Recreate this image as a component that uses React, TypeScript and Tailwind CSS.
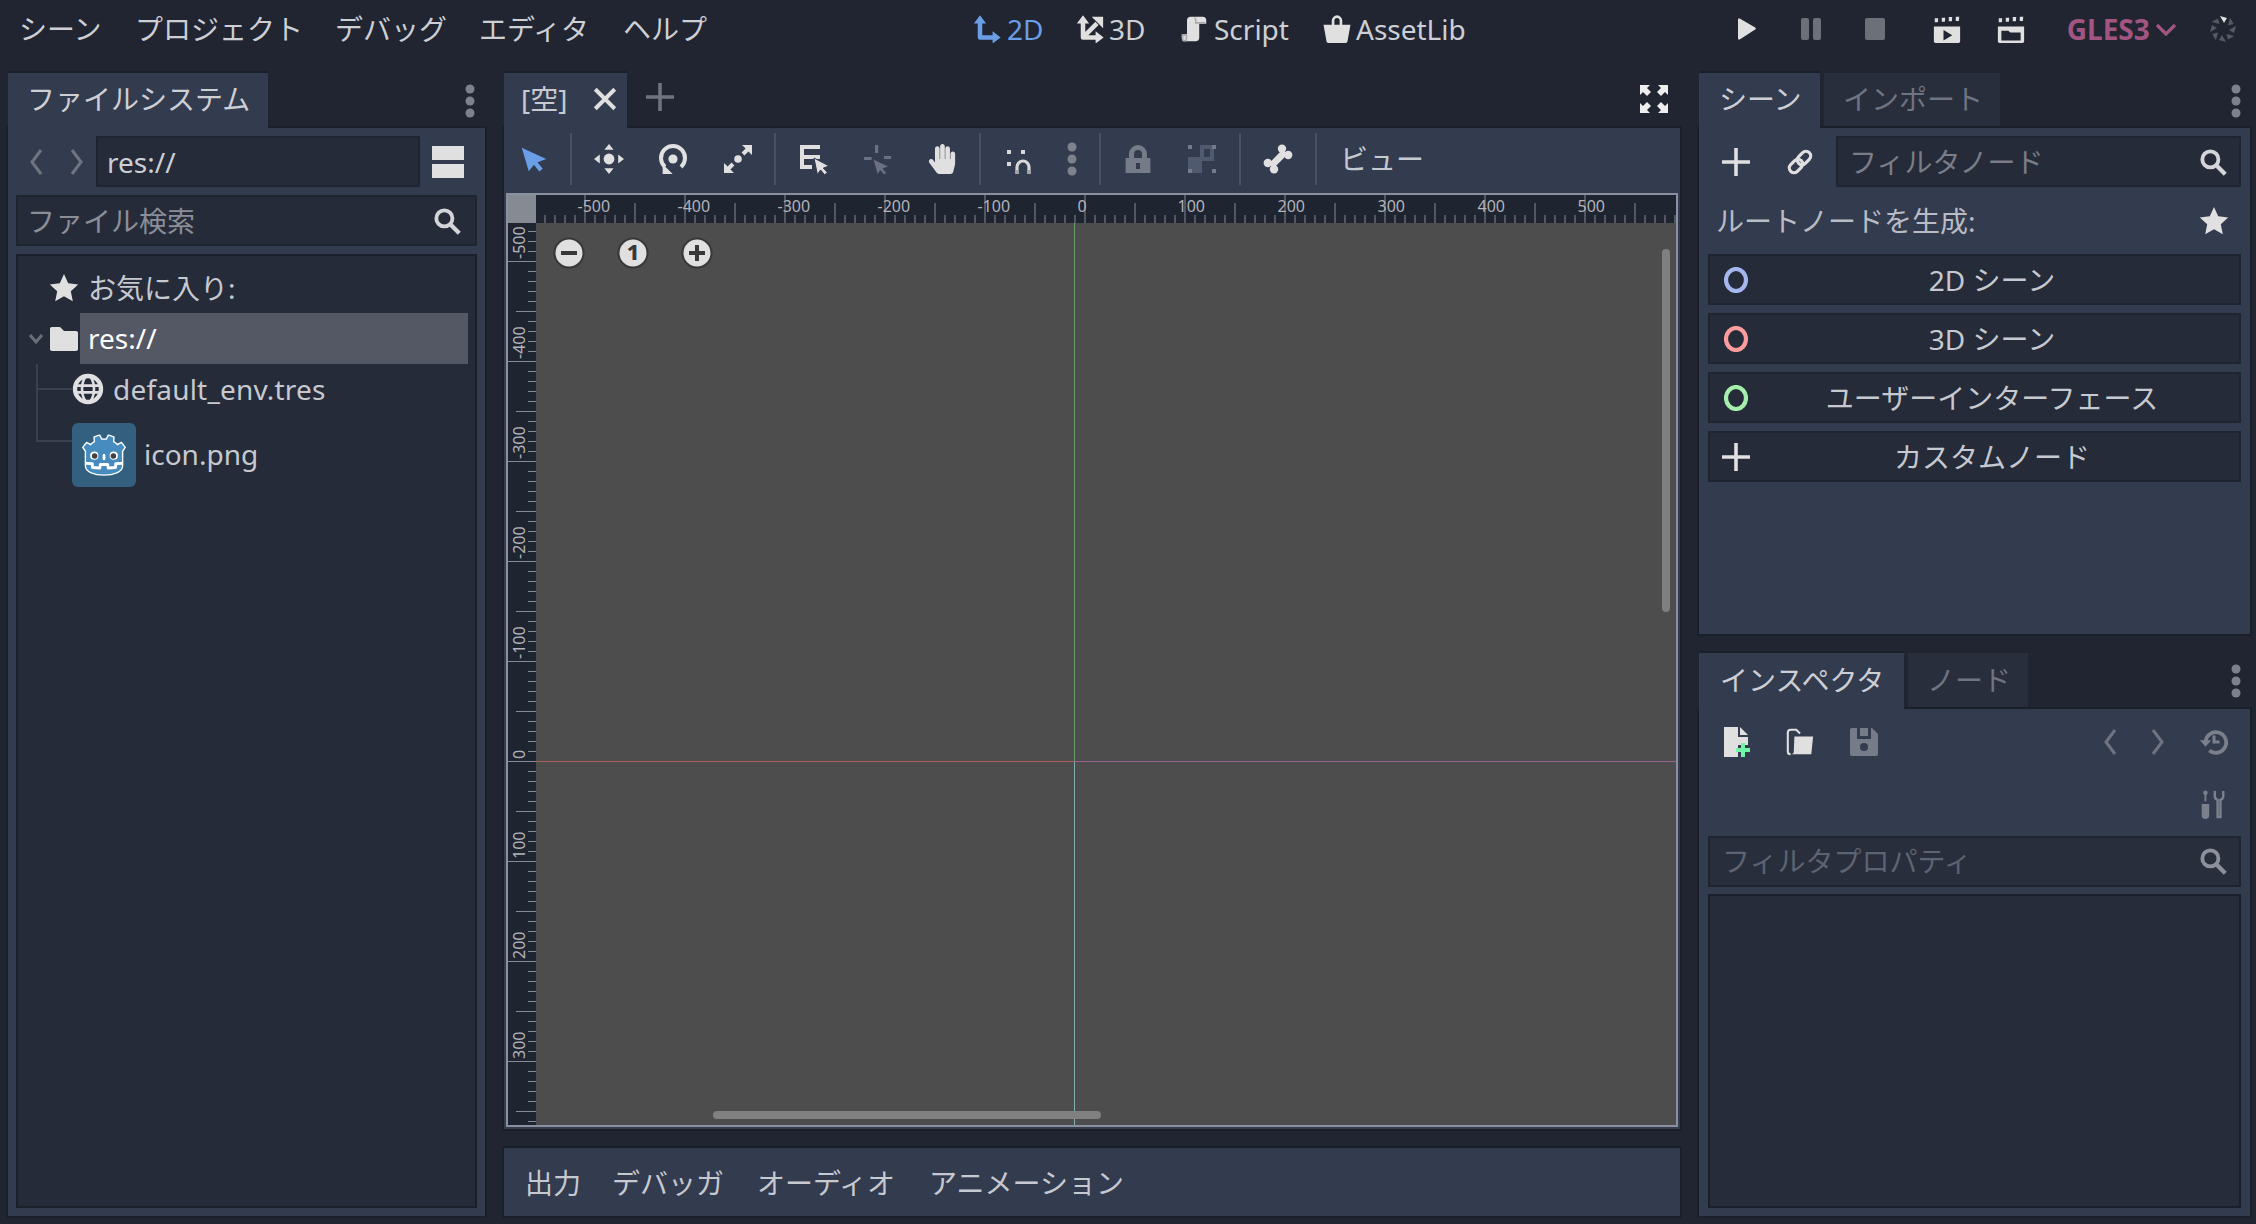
import { FaHandPaper } from "react-icons/fa";

const light = "#e0e0e0";
const dim = "#6f7480";

const majors = [-500, -400, -300, -200, -100, 0, 100, 200, 300, 400, 500];
const vMajors = [-500, -400, -300, -200, -100, 0, 100, 200, 300];

function Icon({
  size = 32,
  className = "",
  children,
}: {
  size?: number;
  className?: string;
  children: React.ReactNode;
}) {
  return (
    <svg viewBox="0 0 16 16" width={size} height={size} className={`block shrink-0 ${className}`}>
      {children}
    </svg>
  );
}

function Dots() {
  return (
    <svg width="10" height="34" viewBox="0 0 10 34" className="block shrink-0">
      <circle cx="5" cy="5" r="4.5" fill="#7d818c" />
      <circle cx="5" cy="17" r="4.5" fill="#7d818c" />
      <circle cx="5" cy="29" r="4.5" fill="#7d818c" />
    </svg>
  );
}

function Plus({ size = 32, color = light }: { size?: number; color?: string }) {
  return (
    <Icon size={size}>
      <path d="M7.1 1h1.8v6.1H15v1.8H8.9V15H7.1V8.9H1V7.1h6.1z" fill={color} />
    </Icon>
  );
}

function Search({ color = "#d4d5d8" }: { color?: string }) {
  return (
    <Icon size={28}>
      <circle cx="6.5" cy="6.5" r="4.6" fill="none" stroke={color} strokeWidth="2.2" />
      <path d="M10 10l5 5" stroke={color} strokeWidth="2.4" />
    </Icon>
  );
}

function Star({ color = light }: { color?: string }) {
  return (
    <Icon size={32}>
      <path d="M8 1l2.1 4.6 5 .6-3.7 3.4 1 5L8 12.1l-4.400 2.500 1-5L.900 6.200l5-.6z" fill={color} />
    </Icon>
  );
}

function Chevron({ dir, color = dim }: { dir: "l" | "r"; color?: string }) {
  return (
    <svg width="16" height="28" viewBox="0 0 16 28" className="block shrink-0">
      <path d={dir === "l" ? "M13 2L4 14l9 12" : "M3 2l9 12-9 12"} fill="none" stroke={color} strokeWidth="3" />
    </svg>
  );
}

function Ring({ color }: { color: string }) {
  return (
    <svg width="24" height="26" viewBox="0 0 24 26" className="block">
      <ellipse cx="12" cy="13" rx="10" ry="11" fill="none" stroke={color} strokeWidth="4.200" />
    </svg>
  );
}

function Clapper({ children }: { children: React.ReactNode }) {
  return (
    <Icon size={28}>
      <path d="M1 1.800h2l-.2 2.400H1zM5 1.500h2l-.2 2.400H5zM9 1.200h2l-.2 2.400H9zM13 1h2l-.2 2.400H13z" fill={light} />
      <path d="M.5 6.500h15V15c0 .6-.4 1-1 1h-13c-.6 0-1-.4-1-1z" fill={light} />
      {children}
    </Icon>
  );
}

function Sep() {
  return <div className="h-[52px] w-[2px] bg-[#4a5164] shrink-0" />;
}

function Tool({ w, children }: { w: number; children: React.ReactNode }) {
  return (
    <div className="flex items-center justify-center shrink-0" style={{ width: w }}>
      {children}
    </div>
  );
}

function GodotIcon() {
  return (
    <svg viewBox="0 0 128 128" width="58" height="58" className="block">
      <g transform="scale(.101) translate(122 122)">
        <g fill="#fff">
          <path d="M105 673v33q407 354 814 0v-33z" />
          <path
            d="m105 673 152 14q12 1 15 14l4 67 132 10 8-61q2-11 15-15h162q13 4 15 15l8 61 132-10 4-67q3-13 15-14l152-14V427q30-39 56-81-35-59-83-108-43 20-82 47-40-37-88-64 7-51 8-102-59-28-123-42-26 43-46 89-49-7-98 0-20-46-46-89-64 14-123 42 1 51 8 102-48 27-88 64-39-27-82-47-48 49-83 108 26 42 56 81zm0 33v39c0 276 813 276 814 0v-39l-134 12-5 69q-2 10-14 13l-162 11q-12 0-16-11l-10-65H446l-10 65q-4 11-16 11l-162-11q-12-3-14-13l-5-69z"
            fill="#478cbf"
            stroke="#fff"
            strokeWidth="30"
          />
          <path d="M483 600c0 34 58 34 58 0v-86c0-34-58-34-58 0z" />
          <circle cx="725" cy="526" r="90" />
          <circle cx="299" cy="526" r="90" />
        </g>
        <g fill="#414042">
          <circle cx="307" cy="532" r="60" />
          <circle cx="717" cy="532" r="60" />
        </g>
      </g>
    </svg>
  );
}

function ZoomButton({ children }: { children: React.ReactNode }) {
  return (
    <svg width="32" height="32" viewBox="0 0 32 32" className="block">
      <circle cx="16" cy="16" r="14.500" fill={light} stroke="#383838" strokeWidth="2" />
      {children}
    </svg>
  );
}

function Spinner() {
  const angles = [0, 45, 90, 135, 180, 225, 270, 315];
  return (
    <svg width="30" height="30" viewBox="0 0 30 30" className="block">
      {angles.map((a, i) => (
        <path
          key={a}
          d="M12 2l7 2-3 5z"
          fill={i === 0 ? light : "#555a65"}
          transform={`rotate(${a} 15 15)`}
        />
      ))}
    </svg>
  );
}

function HorizontalRuler() {
  const ticks = Array.from({ length: 114 }, (_, i) => i * 10 + 8.5);
  return (
    <svg width="1140" height="28" viewBox="0 0 1140 28" className="block shrink-0">
      {ticks.map((x, i) => {
        const n = i - 4;
        const top = n % 10 === 0 ? 0 : n % 5 === 0 ? 8 : 20;
        return <rect key={x} x={x} y={top} width="1" height={28 - top} fill="#868a94" />;
      })}
      {majors.map((v, i) => (
        <text key={v} x={41.5 + i * 100} y="17" fontSize="16" fill="#b0b3bb">
          {v}
        </text>
      ))}
    </svg>
  );
}

function VerticalRuler() {
  const ticks = Array.from({ length: 91 }, (_, i) => i * 10 + 8);
  return (
    <svg width="28" height="902" viewBox="0 0 28 902" className="block shrink-0">
      {ticks.map((y, i) => {
        const n = i - 3;
        const left = n % 10 === 0 ? 0 : n % 5 === 0 ? 8 : 20;
        return <rect key={y} x={left} y={y} width={28 - left} height="1" fill="#868a94" />;
      })}
      {vMajors.map((v, i) => (
        <text
          key={v}
          x="0"
          y="0"
          fontSize="16"
          fill="#b0b3bb"
          transform={`translate(17 ${36 + i * 100}) rotate(-90)`}
        >
          {v}
        </text>
      ))}
    </svg>
  );
}

function SceneButton({ icon, label }: { icon: React.ReactNode; label: string }) {
  return (
    <div className="h-[51px] grid grid-cols-[52px_1fr_17px] items-center bg-[#252b39] border-2 border-[#1f2431]">
      <div className="flex justify-center">{icon}</div>
      <div className="text-center text-[#c6c9cf]">{label}</div>
      <div />
    </div>
  );
}

export default function App() {
  return (
    <div className="w-[2256px] h-[1224px] overflow-hidden flex flex-col bg-[#202531] text-[28px] leading-none text-[#cdcfd5] [font-family:'Noto_Sans','Noto_Sans_CJK_JP',sans-serif]">
      {/* Top bar */}
      <div className="h-[58px] mb-[15px] flex items-center shrink-0">
        <div className="w-[973px] flex items-center pl-[19px] shrink-0">
          <div className="w-[116px]">シーン</div>
          <div className="w-[200px]">プロジェクト</div>
          <div className="w-[144px]">デバッグ</div>
          <div className="w-[144px]">エディタ</div>
          <div>ヘルプ</div>
        </div>
        <div className="w-[103px] flex items-center gap-[6px] text-[#6a9ee6] shrink-0">
          <Icon size={28}>
            <path d="M4 3.500v9.300h8" fill="none" stroke="#6a9ee6" strokeWidth="2.600" strokeLinejoin="round" />
            <path d="M4 .2l3.500 4.600H.5zM15.800 12.800l-4.600 3.500v-7z" fill="#6a9ee6" />
          </Icon>
          2D
        </div>
        <div className="w-[104px] flex items-center gap-[5px] shrink-0">
          <Icon size={28}>
            <path d="M4 3.500v9.300h8M4 12.800l8-8" fill="none" stroke={light} strokeWidth="2.600" strokeLinejoin="round" />
            <path d="M4 .2l3.500 4.600H.5zM15.800 12.800l-4.600 3.500v-7zM15.500 1v6.500l-6.500-6.500z" fill={light} />
          </Icon>
          3D
        </div>
        <div className="w-[143px] flex items-center gap-[6px] shrink-0">
          <Icon size={28}>
            <path d="M6 1c-1.200 0-2 .8-2 2v8H1v2c0 1.200.8 2 2 2h6c1.200 0 2-.8 2-2V5h4V3c0-1.200-.8-2-2-2z" fill={light} />
            <path d="M1.500 11.500v2c0 .8.500 1.200 1 1.200s1.200-.4 1.200-1.200v-2zM8 1.500c.8.300 1 .8 1 1.500v1.500h5.500" fill="none" stroke="#a9abae" strokeWidth=".9" />
          </Icon>
          Script
        </div>
        <div className="flex items-center gap-[5px] shrink-0">
          <Icon size={28}>
            <path d="M5 6V3.200a3 3 0 0 1 6 0V6H9.500V3.200a1.500 1.500 0 0 0-3 0V6z" fill={light} />
            <path d="M.3 5.500h15.400l-1.700 9.500c-.1.600-.5 1-1 1H3c-.5 0-.9-.4-1-1z" fill={light} />
          </Icon>
          AssetLib
        </div>
        <div className="ml-[271px] flex items-center shrink-0">
          <div className="w-[64px]">
            <svg width="20" height="22" viewBox="0 0 20 22" className="block">
              <path d="M1 1.500c0-1 .8-1.400 1.700-.9l15.500 8.900c.9.500.9 1.500 0 2L2.700 21.400c-.9.500-1.700.1-1.700-.9z" fill={light} />
            </svg>
          </div>
          <div className="w-[64px] flex gap-[4px]">
            <div className="w-[8px] h-[22px] rounded-[2px] bg-[#6c7079]" />
            <div className="w-[8px] h-[22px] rounded-[2px] bg-[#6c7079]" />
          </div>
          <div className="w-[68px]">
            <div className="w-[20px] h-[22px] rounded-[2px] bg-[#6c7079]" />
          </div>
          <div className="w-[64px]">
            <Clapper>
              <path d="M6 8.500l5 3-5 3z" fill="#202531" />
            </Clapper>
          </div>
          <div className="w-[70px]">
            <Clapper>
              <path d="M2.500 9v5.500h11V10H7.500l-1-1z" fill="#202531" />
            </Clapper>
          </div>
          <div className="w-[88px] font-bold text-[#a25580]">GLES3</div>
          <div className="w-[53px]">
            <svg width="22" height="13" viewBox="0 0 22 13" className="block">
              <path d="M2 2l9 9 9-9" fill="none" stroke="#a25580" strokeWidth="3.200" />
            </svg>
          </div>
          <Spinner />
        </div>
      </div>

      {/* Docks */}
      <div className="flex-1 min-h-0 flex pl-[8px] pr-[6px] pb-[8px]">
        {/* File system */}
        <div className="w-[477px] mr-[19px] shrink-0 flex flex-col">
          <div className="h-[55px] flex items-center shrink-0 pr-[10px]">
            <div className="relative z-10 w-[260px] h-full pl-[19px] pb-[4px] flex items-center bg-[#333b4f] shadow-[0_-2px_0_#1b1f2a]">
              ファイルシステム
            </div>
            <div className="ml-auto">
              <Dots />
            </div>
          </div>
          <div className="flex-1 min-h-0 flex flex-col bg-[#333b4f] shadow-[0_0_0_2px_#1b1f2a] px-[8px] pt-[8px] pb-[8px]">
            <div className="h-[51px] flex items-center shrink-0">
              <div className="w-[44px] flex justify-center -ml-[2px]">
                <Chevron dir="l" />
              </div>
              <div className="w-[38px] flex justify-center">
                <Chevron dir="r" />
              </div>
              <div className="w-[324px] h-full flex items-center pl-[9px] bg-[#252b39] border-2 border-[#1f2431]">
                res://
              </div>
              <div className="ml-[12px] w-[32px] flex flex-col gap-[4px]">
                <div className="h-[14px] bg-[#e0e0e0]" />
                <div className="h-[14px] bg-[#e0e0e0]" />
              </div>
            </div>
            <div className="mt-[8px] h-[51px] shrink-0 flex items-center justify-between pl-[9px] pr-[14px] bg-[#252b39] border-2 border-[#1f2431] text-[#8a8e98]">
              ファイル検索
              <Search />
            </div>
            <div className="relative mt-[8px] flex-1 min-h-0 bg-[#252b39] border-2 border-[#1b1f2a]">
              <div className="h-[57px] pt-[6px] flex items-center pl-[30px] gap-[8px] text-[#c6c9cf]">
                <Star />
                お気に入り:
              </div>
              <div className="h-[51px] flex items-center">
                <div className="w-[30px] flex justify-end pr-[4px]">
                  <svg width="16" height="12" viewBox="0 0 16 12" className="block">
                    <path d="M2 2l6 7 6-7" fill="none" stroke="#6b6f7a" strokeWidth="3" />
                  </svg>
                </div>
                <Icon size={32}>
                  <path d="M1 3c0-.6.4-1 1-1h4l2 2h6c.6 0 1 .4 1 1v8c0 .6-.4 1-1 1H2c-.6 0-1-.4-1-1z" fill={light} />
                </Icon>
                <div className="h-full w-[388px] pb-[2px] flex items-center pl-[8px] bg-[#545864] text-white">res://</div>
              </div>
              <div className="h-[50px] flex items-center pl-[54px] gap-[9px] text-[#c6c9cf]">
                <Icon size={32}>
                  <circle cx="8" cy="8" r="6.500" fill="none" stroke={light} strokeWidth="2.200" />
                  <path d="M1.500 6.300h13M1.500 9.700h13" stroke={light} strokeWidth="1.300" />
                  <ellipse cx="8" cy="8" rx="3" ry="6.500" fill="none" stroke={light} strokeWidth="1.300" />
                </Icon>
                <span className="tracking-[0.2px]">default_env.tres</span>
              </div>
              <div className="h-[64px] mt-[9px] flex items-center pl-[54px] gap-[8px] text-[#c6c9cf]">
                <div className="w-[64px] h-[64px] rounded-[6px] bg-[#34607f] flex items-center justify-center">
                  <GodotIcon />
                </div>
                <span className="pb-[2px]">icon.png</span>
              </div>
              {/* tree guide lines */}
              <div className="absolute left-[18px] top-[108px] w-[2px] h-[78px] bg-[#3a4050]" />
              <div className="absolute left-[18px] top-[132px] w-[36px] h-[2px] bg-[#3a4050]" />
              <div className="absolute left-[18px] top-[184px] w-[36px] h-[2px] bg-[#3a4050]" />
            </div>
          </div>
        </div>

        {/* Center */}
        <div className="w-[1176px] mr-[19px] shrink-0 flex flex-col">
          <div className="h-[55px] flex items-center shrink-0">
            <div className="relative z-10 w-[123px] h-full pl-[17px] pb-[3px] flex items-center gap-[25px] bg-[#333b4f] shadow-[0_-2px_0_#1b1f2a]">
              <span className="text-[#c6c9cf]">[空]</span>
              <Icon size={26}>
                <path d="M2 2l12 12M14 2L2 14" stroke={light} strokeWidth="2.400" />
              </Icon>
            </div>
            <div className="ml-[17px] mb-[8px]">
              <Plus size={32} color="#6f7480" />
            </div>
            <div className="ml-auto mr-[10px] mb-[3px]">
              <Icon size={32}>
                <path d="M1 1h5L4.500 2.500 6.500 4.500 4.500 6.500 2.500 4.500 1 6zM15 1v5l-1.500-1.500-2 2-2-2 2-2L10 1zM1 15v-5l1.500 1.500 2-2 2 2-2 2L6 15zM15 15h-5l1.500-1.500-2-2 2-2 2 2L15 10z" fill="#eee" />
              </Icon>
            </div>
          </div>
          <div className="h-[1001px] shrink-0 flex flex-col bg-[#333b4f] shadow-[0_0_0_2px_#1b1f2a] px-[2px] pb-[2px]">
            {/* Toolbar */}
            <div className="h-[65px] pb-[3px] flex items-center shrink-0 pl-[9px]">
              <Tool w={38}>
                <Icon size={28}>
                  <path d="M1 1.500L15 8l-5 1.800 3 3.700-2 1.700-3-3.900L5 15z" fill="#6a9ee6" />
                </Icon>
              </Tool>
              <div className="w-[17px]" />
              <Sep />
              <div className="w-[5px]" />
              <Tool w={64}>
                <Icon size={32}>
                  <path d="M8 .5l2.300 2.900H5.700zM8 15.500l2.300-2.900H5.700zM.5 8l2.900-2.300v4.600zM15.500 8l-2.900-2.300v4.600z" fill={light} />
                  <circle cx="8" cy="8" r="2.700" fill={light} />
                </Icon>
              </Tool>
              <Tool w={64}>
                <Icon size={32}>
                  <path d="M4 12a6 6 0 1 1 8 0" fill="none" stroke={light} strokeWidth="2" />
                  <path d="M2.800 15.500v-5l5 5z" fill={light} />
                  <circle cx="8" cy="8" r="2.300" fill={light} />
                </Icon>
              </Tool>
              <Tool w={64}>
                <div className="pl-[2px]">
                  <Icon size={32}>
                    <path d="M10 1h5v5l-1.800-1.800-2 2-1.400-1.400 2-2zM6 15H1v-5l1.800 1.800 2-2 1.400 1.400-2 2z" fill={light} />
                    <circle cx="8" cy="8" r="1.900" fill={light} />
                  </Icon>
                </div>
              </Tool>
              <div className="w-[5px]" />
              <Sep />
              <div className="w-[6px]" />
              <Tool w={64}>
                <Icon size={32}>
                  <path d="M1 1h10v2H3v3h8v2H3v3h4v2H1z" fill={light} />
                  <path d="M8 7.500l7.500 4-2.800 1 2 2.300-1.400 1.100-2-2.400-1.600 2.300z" fill={light} stroke="#333b4f" strokeWidth=".5" />
                </Icon>
              </Tool>
              <Tool w={64}>
                <Icon size={32}>
                  <path d="M6.500 1h1.600v4H6.500zM1 7h3.800v1.500H1zM11 6.500h3.500V8H11z" fill="#6b7180" />
                  <path d="M5.500 8l8 3.800-3 1 1.800 2.200-1.300 1-1.800-2.200-1.500 2z" fill="#6b7180" stroke="#333b4f" strokeWidth=".4" />
                </Icon>
              </Tool>
              <Tool w={64}>
                <FaHandPaper size={30} color={light} />
              </Tool>
              <div className="w-[5px]" />
              <Sep />
              <div className="w-[6px]" />
              <Tool w={64}>
                <Icon size={32}>
                  <path d="M2 3.500h2v2H2zM9 3.500h2v2H9zM2 9.500h2v2H2z" fill="#d8d8d8" />
                  <path d="M7 15.500V12a3 3 0 0 1 6 0v3.500" fill="none" stroke="#d8d8d8" strokeWidth="1.600" />
                  <path d="M6.200 13.500h1.600v2H6.200zM12.200 13.500h1.600v2h-1.600z" fill="#a4a6ab" />
                </Icon>
              </Tool>
              <Tool w={42}>
                <Dots />
              </Tool>
              <div className="w-[6px]" />
              <Sep />
              <div className="w-[5px]" />
              <Tool w={64}>
                <Icon size={32}>
                  <path d="M1.800 15V7.500H3.500V5.500a4.500 4.500 0 0 1 9 0v2h1.700V15z" fill="#767b89" />
                  <path d="M6 7.500v-2a2 2 0 0 1 4 0v2z" fill="#333b4f" />
                  <rect x="7" y="10" width="2" height="3" fill="#333b4f" />
                </Icon>
              </Tool>
              <Tool w={64}>
                <Icon size={32}>
                  <path d="M1 7h7v8H1z" fill="#505a6e" />
                  <path d="M8 2h5v6H8z" fill="none" stroke="#505a6e" strokeWidth="2" />
                  <path d="M1 1h2v2H1zM13 1h2v2h-2zM1 13h2v2H1zM13 13h2v2h-2z" fill="#767b89" />
                </Icon>
              </Tool>
              <div className="w-[5px]" />
              <Sep />
              <div className="w-[5px]" />
              <Tool w={64}>
                <Icon size={32}>
                  <path d="M4.500 11.500l7-7" stroke={light} strokeWidth="3.400" />
                  <circle cx="10" cy="2.900" r="2.100" fill={light} />
                  <circle cx="13.100" cy="6" r="2.100" fill={light} />
                  <circle cx="2.900" cy="10" r="2.100" fill={light} />
                  <circle cx="6" cy="13.100" r="2.100" fill={light} />
                </Icon>
              </Tool>
              <div className="w-[5px]" />
              <Sep />
              <div className="ml-[23px] text-[#c6c9cf]">ビュー</div>
            </div>

            {/* Viewport */}
            <div className="h-[934px] flex flex-col border-2 border-[#8a90a0] shrink-0 overflow-hidden">
              <div className="h-[28px] flex shrink-0 bg-[#1f2431]">
                <div className="w-[28px] bg-[#868a93] shrink-0" />
                <HorizontalRuler />
              </div>
              <div className="flex-1 min-h-0 flex">
                <div className="w-[28px] shrink-0 bg-[#1f2431] overflow-hidden">
                  <VerticalRuler />
                </div>
                <div className="relative flex-1 bg-[#4d4d4d]">
                  <div className="absolute left-[538px] top-0 h-[538px] w-px bg-[#67a067]" />
                  <div className="absolute left-[538px] top-[538px] bottom-0 w-px bg-[#7fb0ad]" />
                  <div className="absolute left-0 top-[538px] w-[538px] h-px bg-[#a85f55]" />
                  <div className="absolute left-[538px] right-0 top-[538px] h-px bg-[#97608f]" />
                  <div className="absolute left-[17px] top-[14px] flex gap-[32px]">
                    <ZoomButton>
                      <rect x="8" y="14" width="16" height="4" fill="#383838" />
                    </ZoomButton>
                    <ZoomButton>
                      <text x="16" y="23" fontSize="22" fontWeight="800" textAnchor="middle" fill="#383838">
                        1
                      </text>
                    </ZoomButton>
                    <ZoomButton>
                      <path d="M14 8h4v6h6v4h-6v6h-4v-6H8v-4h6z" fill="#383838" />
                    </ZoomButton>
                  </div>
                  <div className="absolute left-[1126px] top-[26px] w-[8px] h-[363px] rounded-[4px] bg-[#808080]" />
                  <div className="absolute left-[177px] top-[888px] w-[388px] h-[8px] rounded-[4px] bg-[#808080]" />
                </div>
              </div>
            </div>
          </div>
          <div className="mt-[19px] flex-1 flex items-center bg-[#333b4f] shadow-[0_0_0_2px_#1b1f2a] pl-[21px] pt-[2px] text-[#c6c9cf]">
            <div className="w-[87px]">出力</div>
            <div className="w-[145px]">デバッガ</div>
            <div className="w-[172px]">オーディオ</div>
            <div>アニメーション</div>
          </div>
        </div>

        {/* Right docks */}
        <div className="w-[551px] shrink-0 flex flex-col">
          <div className="h-[55px] flex items-center shrink-0 pr-[9px]">
            <div className="relative z-10 w-[121px] h-full pl-[20px] pb-[4px] flex items-center bg-[#333b4f] shadow-[0_-2px_0_#1b1f2a]">
              シーン
            </div>
            <div className="ml-[4px] w-[176px] h-full pl-[19px] pb-[4px] flex items-center bg-[#282e3c] text-[#6f7482]">
              インポート
            </div>
            <div className="ml-auto">
              <Dots />
            </div>
          </div>
          <div className="h-[506px] shrink-0 bg-[#333b4f] shadow-[0_0_0_2px_#1b1f2a] px-[9px] pt-[8px] flex flex-col">
            <div className="h-[51px] flex items-center shrink-0">
              <div className="w-[56px] flex justify-center">
                <Plus size={32} />
              </div>
              <div className="w-[64px] ml-[4px] flex justify-center">
                <Icon size={30}>
                  <g transform="rotate(-45 8 8)" fill="none" stroke={light} strokeWidth="1.700">
                    <rect x="1" y="5.500" width="8" height="5" rx="2.500" />
                    <rect x="7" y="5.500" width="8" height="5" rx="2.500" />
                  </g>
                </Icon>
              </div>
              <div className="flex-1 ml-[4px] h-full flex items-center justify-between pl-[11px] pr-[12px] bg-[#252b39] border-2 border-[#1f2431] text-[#797d88]">
                フィルタノード
                <Search />
              </div>
            </div>
            <div className="h-[67px] flex items-center justify-between pl-[8px] pr-[11px] shrink-0 text-[#b9bcc4]">
              ルートノードを生成:
              <Star />
            </div>
            <div className="flex flex-col gap-[8px] shrink-0">
              <SceneButton icon={<Ring color="#a5b7f0" />} label="2D シーン" />
              <SceneButton icon={<Ring color="#fc9c9c" />} label="3D シーン" />
              <SceneButton icon={<Ring color="#a5efac" />} label="ユーザーインターフェース" />
              <SceneButton icon={<Plus size={32} />} label="カスタムノード" />
            </div>
          </div>
          <div className="mt-[19px] h-[56px] flex items-center shrink-0 pr-[9px]">
            <div className="relative z-10 w-[205px] h-full pl-[21px] pb-[3px] flex items-center bg-[#333b4f] shadow-[0_-2px_0_#1b1f2a]">
              インスペクタ
            </div>
            <div className="ml-[4px] w-[120px] h-full pl-[19px] pb-[3px] flex items-center bg-[#282e3c] text-[#6f7482]">
              ノード
            </div>
            <div className="ml-auto">
              <Dots />
            </div>
          </div>
          <div className="flex-1 min-h-0 flex flex-col bg-[#333b4f] shadow-[0_0_0_2px_#1b1f2a] px-[9px] pb-[8px]">
            <div className="h-[66px] flex items-center shrink-0">
              <div className="w-[56px] flex justify-center">
                <Icon size={32}>
                  <path d="M2 .500h7v5h5v4H9v6H2z" fill={light} />
                  <path d="M10 .500l4 4h-4z" fill={light} />
                  <path d="M10.500 8.500h2v2.500H15v2h-2.500v2.500h-2V13H8v-2h2.500z" fill="#6ff5a5" />
                </Icon>
              </div>
              <div className="w-[72px] flex justify-center">
                <Icon size={30}>
                  <path d="M3 14.500c-1 0-1.500-.5-1.500-1.500V3c0-1 .5-1.500 1.500-1.500h3l2 2" fill="none" stroke={light} strokeWidth="1.100" />
                  <path d="M5 5h10l-1 9.500H3.500c.8-.3 1.200-.8 1.200-1.500z" fill={light} />
                </Icon>
              </div>
              <div className="w-[56px] flex justify-center">
                <Icon size={32}>
                  <path d="M2 1h10l3 3v10c0 .6-.4 1-1 1H2c-.6 0-1-.4-1-1V2c0-.6.4-1 1-1z" fill="#767b89" />
                  <path d="M4.500 1h1.500v4H10V1h1.500v5.500h-7z" fill="#333b4f" />
                  <circle cx="8" cy="10.500" r="2" fill="#333b4f" />
                </Icon>
              </div>
              <div className="ml-[210px] w-[16px]">
                <Chevron dir="l" />
              </div>
              <div className="ml-[32px] w-[16px]">
                <Chevron dir="r" />
              </div>
              <div className="ml-[33px]">
                <Icon size={30}>
                  <path d="M3.500 8a5.500 5.500 0 1 1 2 4.500" fill="none" stroke="#7b808c" strokeWidth="2" />
                  <path d="M.5 7h6l-3 3.500z" fill="#7b808c" />
                  <path d="M8 4.500V8h3" fill="none" stroke="#7b808c" strokeWidth="1.600" />
                </Icon>
              </div>
            </div>
            <div className="h-[61px] pb-[4px] shrink-0 flex items-center justify-end pr-[14px]">
              <Icon size={30}>
                <path d="M4 1.500h1v5H4zM2.500 8h4v6a2 2 0 0 1-4 0z" fill="#7b808c" />
                <circle cx="4.500" cy="2" r="1.200" fill="#7b808c" />
                <path d="M9.500 1v3c0 1 .7 1.500 1.500 1.800V15h1.500V5.800C13.300 5.500 14 5 14 4V1" fill="none" stroke="#7b808c" strokeWidth="1.300" />
              </Icon>
            </div>
            <div className="h-[51px] shrink-0 flex items-center justify-between pl-[12px] pr-[12px] pb-[2px] bg-[#282e3c] border-2 border-[#1f2431] text-[#5d6372]">
              フィルタプロパティ
              <Search color="#8d909a" />
            </div>
            <div className="mt-[7px] flex-1 min-h-0 bg-[#272c3b] border-2 border-[#1b1f2d]" />
          </div>
        </div>
      </div>
    </div>
  );
}
